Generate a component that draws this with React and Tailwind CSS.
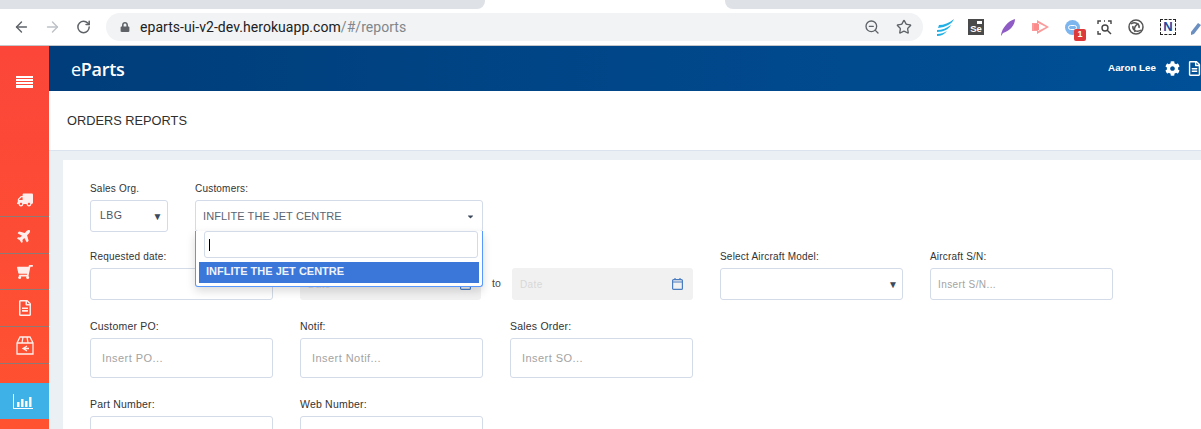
import React from "react";
import { ArrowLeft, ArrowRight, RotateCw, ZoomOut, Star } from "lucide-react";
import { FaLock, FaTruck, FaPlane, FaShoppingCart, FaRegFileAlt, FaCog, FaCaretDown } from "react-icons/fa";

function Exts() {
  return (
    <div className="flex shrink-0 items-center">
      {/* feather wave */}
      <svg width="18" height="17" viewBox="0 0 18 17" className="ml-[13px]">
        <path d="M3 6 C8 6 13 4 18 0 C16 5 10 8 2 9 Z" fill="#1fb0e6" />
        <path d="M1 11 C6 11 11 9 15 6 C13 10 8 13 1 13 Z" fill="#1fb0e6" />
        <path d="M1 17 C5 17 9 15 11 12 C8 14 5 15 1 15 Z" fill="#1fb0e6" />
      </svg>
      <div className="relative ml-[14px] flex h-4 w-4 items-end justify-center bg-[#4a4a4a] font-['Liberation_Sans',sans-serif] text-[9.5px] leading-[12px] font-bold text-white">
        Se
        <span className="absolute top-[2px] right-[2px] h-[3px] w-[5px] bg-white" />
      </div>
      <svg width="16" height="17" viewBox="0 0 16 17" className="ml-[16px]">
        <path d="M1 16 C2 9 8 2 15 0 C15 6 10 12 3 14 L1 17 Z" fill="#8e5cc4" />
      </svg>
      <svg width="17" height="14" viewBox="0 0 17 14" className="ml-[16px]">
        <path d="M0 3 H5 V0 L17 7 L5 14 V11 H0 Z" fill="#fb9a9a" />
        <path d="M6 3 L14 7 L6 11 Z" fill="#fff" />
        <path d="M2 4 H7 V10 H2 Z" fill="#fb8a8a" />
      </svg>
      <div className="relative ml-[16px] h-[15px] w-[15px] rounded-full bg-[#7db5ee]">
        <span className="absolute top-[5px] left-[3px] h-[5px] w-[9px] rounded-sm border border-white" />
        <span className="absolute top-[9px] left-[9px] flex h-[12px] w-3 items-center justify-center rounded-[2px] bg-[#dd3b3b] font-['Liberation_Sans',sans-serif] text-[9px] font-bold text-white">
          1
        </span>
      </div>
      <svg width="15" height="15" viewBox="0 0 15 15" className="ml-[17px]" fill="none" stroke="#444" strokeWidth="1.4">
        <path d="M1 4 V1 H4 M11 1 H14 V4 M1 11 V14 H4 M7 1 H8" />
        <circle cx="8" cy="8" r="3" />
        <path d="M10 10 L14 14" />
      </svg>
      <svg width="16" height="16" viewBox="0 0 16 16" className="ml-[16px]" fill="none" stroke="#555" strokeWidth="1.5">
        <circle cx="8" cy="8" r="7" />
        <path d="M3 5 C7 2 12 5 11 9 M13 11 C9 14 4 11 5 7 M7 13 C5 9 8 5 11 5" />
      </svg>
      <div className="relative ml-[16px] flex h-4 w-4 items-center justify-center border border-dashed border-[#222] font-['Liberation_Sans',sans-serif] text-[13px] font-bold text-[#1a4a9c]">
        N
      </div>
      <svg width="10" height="16" viewBox="0 0 10 16" className="ml-[15px]">
        <path d="M0 13 L7 4 L10 6 L3 15 L0 16 Z" fill="#6a8fc0" />
      </svg>
    </div>
  );
}

function Field({ label, labelClass = "text-[10px] tracking-[0.2px] mb-[5px]", className = "", children }) {
  return (
    <div className={className}>
      <div className={`h-[12px] leading-[12px] text-[#333] ${labelClass}`}>{label}</div>
      {children}
    </div>
  );
}

function Box({ h = "h-[32px]", className = "", children }) {
  return (
    <div className={`flex ${h} items-center rounded-[3px] border border-[#d3dbe8] bg-white ${className}`}>
      {children}
    </div>
  );
}

const lowerLabel = "text-[10.5px] tracking-[0.2px] mb-[6px]";

function Insert({ text }) {
  return (
    <Box className="w-[183px] pl-[11px] text-[11px] tracking-[0.45px] text-[#a3a3a3]" h="h-[40px]">
      {text}
    </Box>
  );
}

function Cal() {
  return (
    <svg width="11" height="12" viewBox="0 0 11 12" fill="none" stroke="#4a7cc0" strokeWidth="1.2">
      <rect x="0.6" y="1.6" width="9.8" height="9.8" rx="1" />
      <path d="M0.6 4 H10.4 M3 0 V2 M8 0 V2" />
    </svg>
  );
}

function DateBox() {
  return (
    <div className="flex h-[32px] w-[181px] shrink-0 items-center justify-between rounded-[3px] bg-[#f1f1f1] pr-[10px] pl-[8px] text-[10px] tracking-[0.4px] text-[#d8d8d8]">
      Date
      <Cal />
    </div>
  );
}

function SideItem({ children, className = "" }) {
  return (
    <div className={`flex items-center justify-center border-b border-[#8f7a76] text-white ${className}`}>
      {children}
    </div>
  );
}

export default function App() {
  return (
    <div className="h-[429px] w-full overflow-hidden bg-white font-['Liberation_Sans',sans-serif]">
      {/* browser tabs */}
      <div className="flex h-[9px] justify-between bg-white">
        <div className="w-[485px] rounded-br-lg bg-[#dee1e6]" />
        <div className="w-[476px] rounded-bl-lg bg-[#dee1e6]" />
      </div>
      {/* browser toolbar */}
      <div className="flex h-[37px] items-center border-b border-[#c4c6c9] bg-white pl-[13px]">
        <ArrowLeft size={18} color="#5f6368" strokeWidth={2} />
        <ArrowRight size={18} color="#bdc1c6" strokeWidth={2} className="ml-[14px]" />
        <RotateCw size={16} color="#5f6368" strokeWidth={2.4} className="ml-[15px]" />
        <div className="ml-[15px] flex h-[28px] w-[817px] shrink-0 items-center rounded-full bg-[#f1f3f4] pr-[11px] pl-[14px]">
          <FaLock size={10} color="#5f6368" />
          <span className="ml-[10px] font-['Roboto',sans-serif] text-[14px] tracking-[0.05px] text-[#202124]">
            eparts-ui-v2-dev.herokuapp.com<span className="text-[#80868b]">/#/reports</span>
          </span>
          <ZoomOut size={16} color="#5f6368" className="ml-auto" />
          <Star size={16} color="#5f6368" strokeWidth={2} className="ml-[16px]" />
        </div>
        <Exts />
      </div>

      <div className="flex h-[383px]">
        {/* sidebar */}
        <div className="flex h-full w-[49px] shrink-0 flex-col bg-gradient-to-b from-[#fb4639] to-[#ff5230]">
          <div className="flex h-[137px] flex-col items-center gap-[1px] pt-[30px]">
            <span className="h-[2px] w-[17px] bg-white" />
            <span className="h-[2px] w-[17px] bg-white" />
            <span className="h-[2px] w-[17px] bg-white" />
            <span className="h-[3px] w-[17px] bg-white" />
          </div>
          <SideItem className="h-[34px]"><FaTruck size={16} className="scale-x-[-1] opacity-90" /></SideItem>
          <SideItem className="h-[37px]"><FaPlane size={15} className="-rotate-45 opacity-90" /></SideItem>
          <SideItem className="h-[36px]"><FaShoppingCart size={16} className="scale-x-[-1] opacity-90" /></SideItem>
          <SideItem className="h-[37px]"><FaRegFileAlt size={16} className="opacity-90" /></SideItem>
          <SideItem className="h-[37px]">
            <svg width="18" height="19" viewBox="0 0 18 19" fill="none" stroke="#fff" strokeWidth="1.3" opacity="0.9">
              <path d="M1 7 L4 1 H14 L17 7 V18 H1 Z M1 7 H17 M7 1 L6 7 M11 1 L12 7" />
              <path d="M11 10 L7 12.5 L11 15 M7 12.5 H13" />
            </svg>
          </SideItem>
          <div className="h-[19px]" />
          <div className="flex h-[36px] items-center justify-center bg-[#3eb1e6] pr-[3px]">
            <svg width="20" height="15" viewBox="0 0 20 15" fill="#fff">
              <path d="M0 0 H1 V14 H20 V15 H0 Z" />
              <rect x="4" y="8" width="2.5" height="5" />
              <rect x="8" y="5" width="2.5" height="8" />
              <rect x="12" y="7" width="2.5" height="6" />
              <rect x="16" y="3" width="2.5" height="10" />
            </svg>
          </div>
        </div>

        <div className="flex min-w-0 flex-1 flex-col">
          {/* app header */}
          <div className="flex h-[45px] shrink-0 items-center bg-gradient-to-r from-[#003d7a] to-[#005097] pl-[22px]">
            <span className="font-['Open_Sans',sans-serif] text-[18px] leading-none font-semibold tracking-[-0.3px] text-white">
              <span className="font-normal">e</span>Parts
            </span>
            <span className="ml-auto text-[9.8px] font-bold text-white">Aaron Lee</span>
            <FaCog size={15} color="#fff" className="ml-[9px]" />
            <FaRegFileAlt size={15} color="#fff" className="mr-[-1px] ml-[7px]" />
          </div>

          {/* title */}
          <div className="flex h-[60px] shrink-0 items-center border-b border-[#dbe4ee] bg-white pl-[18px] text-[12.8px] text-[#2f2f2f]">
            ORDERS REPORTS
          </div>

          {/* form */}
          <div className="min-h-0 flex-1 bg-[#ebf0f5] pt-[9px] pl-[14px]">
            <div className="h-full bg-white pt-[23px] pl-[27px]">
              <div className="flex gap-[27px]">
                <Field label="Sales Org.">
                  <Box className="w-[78px] justify-between pr-[4px] pl-[9px] text-[10.5px] tracking-[0.5px] text-[#4a5564]">
                    LBG
                    <span className="text-[10px] text-[#3d4a5c]">▼</span>
                  </Box>
                </Field>
                <Field label="Customers:" className="relative">
                  <Box className="w-[288px] justify-between px-[7px] text-[11px] tracking-[0.1px] text-[#5a6472]">
                    INFLITE THE JET CENTRE
                    <FaCaretDown size={9} color="#3d4a5c" />
                  </Box>
                  {/* open dropdown */}
                  <div className="absolute top-[48px] left-0 z-10 h-[56px] w-[288px] rounded-b-[3px] border border-t-0 border-[#5897fb] bg-white px-[3px] shadow-[0_4px_10px_rgba(0,0,0,0.15)]">
                    <div className="mr-[1px] ml-[5px] flex h-[27px] items-center rounded-[3px] border border-[#d3dbe8] pl-[4px]">
                      <span className="h-[12px] w-px bg-black" />
                    </div>
                    <div className="mt-[4px] flex h-[21px] items-start bg-[#3b76d9] pt-px pl-[7px] text-[11px] font-bold text-[#eef3fb]">
                      INFLITE THE JET CENTRE
                    </div>
                  </div>
                </Field>
              </div>

              <div className="mt-[19px] flex">
                <Field label="Requested date:">
                  <Box className="w-[183px]" />
                </Field>
                <div className="ml-[27px] flex h-[32px] items-center self-end">
                  <DateBox />
                  <span className="w-[31px] text-center text-[10.5px] text-[#444]">to</span>
                  <DateBox />
                </div>
                <Field label="Select Aircraft Model:" className="ml-[27px]">
                  <Box className="w-[183px] justify-end pr-[4px]">
                    <span className="text-[10px] text-[#3d4a5c]">▼</span>
                  </Box>
                </Field>
                <Field label="Aircraft S/N:" className="ml-[27px]">
                  <Box className="w-[183px] pl-[7px] text-[10px] tracking-[0.4px] text-[#a3a3a3]">Insert S/N...</Box>
                </Field>
              </div>

              <div className="mt-[20px] flex gap-[27px]">
                <Field label="Customer PO:" labelClass={lowerLabel}><Insert text="Insert PO..." /></Field>
                <Field label="Notif:" labelClass={lowerLabel}><Insert text="Insert Notif..." /></Field>
                <Field label="Sales Order:" labelClass={lowerLabel}><Insert text="Insert SO..." /></Field>
              </div>

              <div className="mt-[20px] flex gap-[27px]">
                <Field label="Part Number:" labelClass={lowerLabel}><Insert text="" /></Field>
                <Field label="Web Number:" labelClass={lowerLabel}><Insert text="" /></Field>
              </div>
            </div>
          </div>
        </div>
      </div>
    </div>
  );
}
